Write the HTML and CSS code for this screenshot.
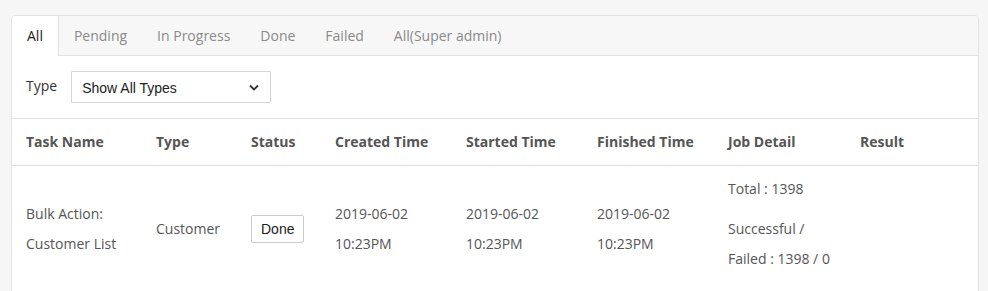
FILE: index.html
```html
<!DOCTYPE html>
<html lang="en">
<head>
    <meta charset="UTF-8">
    <meta name="viewport" content="width=device-width, initial-scale=1.0">
    <title>Tasks</title>
    <link rel="stylesheet" href="styles.css">
</head>
<body>
    <div class="page">
        <div class="panel">
            <ul class="tabs">
                <li class="tab active">All</li>
                <li class="tab">Pending</li>
                <li class="tab">In Progress</li>
                <li class="tab">Done</li>
                <li class="tab">Failed</li>
                <li class="tab">All(Super admin)</li>
            </ul>

            <div class="filter">
                <label class="filter-label">Type</label>
                <div class="select">
                    <span class="select-text">Show All Types</span>
                    <svg class="chevron" width="10" height="7" viewBox="0 0 10 7">
                        <path d="M1 1.5 L5 5.5 L9 1.5" fill="none" stroke="#333" stroke-width="1.8"/>
                    </svg>
                </div>
            </div>

            <table class="tasks">
                <colgroup>
                    <col class="c-name">
                    <col class="c-type">
                    <col class="c-status">
                    <col class="c-time">
                    <col class="c-time">
                    <col class="c-time">
                    <col class="c-detail">
                    <col>
                </colgroup>
                <thead>
                    <tr>
                        <th>Task Name</th>
                        <th>Type</th>
                        <th>Status</th>
                        <th>Created Time</th>
                        <th>Started Time</th>
                        <th>Finished Time</th>
                        <th>Job Detail</th>
                        <th>Result</th>
                    </tr>
                </thead>
                <tbody>
                    <tr>
                        <td>Bulk Action:<br>Customer List</td>
                        <td>Customer</td>
                        <td><button class="status-btn">Done</button></td>
                        <td>2019-06-02<br>10:23PM</td>
                        <td>2019-06-02<br>10:23PM</td>
                        <td>2019-06-02<br>10:23PM</td>
                        <td>
                            <p>Total : 1398</p>
                            <p>Successful /<br>Failed : 1398 / 0</p>
                        </td>
                        <td></td>
                    </tr>
                </tbody>
            </table>
        </div>
    </div>
</body>
</html>
```

FILE: styles.css
```css
* {
    margin: 0;
    padding: 0;
    box-sizing: border-box;
}

body {
    font-family: 'Open Sans', 'Liberation Sans', sans-serif;
    font-size: 14px;
    color: #555;
    background-color: #f6f6f6;
    height: 100vh;
    overflow: hidden;
}

.page {
    padding: 15px 9px 0 11px;
}

.panel {
    background-color: white;
    border: 1px solid #e2e2e2;
    border-radius: 4px 4px 0 0;
    overflow: hidden;
}

.tabs {
    list-style: none;
    display: flex;
    background-color: #f7f7f7;
    border-bottom: 1px solid #e2e2e2;
    height: 40px;
}

.tab {
    padding: 0 15px;
    line-height: 40px;
    color: #8a8a8a;
}

.tab.active {
    background-color: white;
    color: #222;
    border-right: 1px solid #e2e2e2;
    height: 40px;
    margin-bottom: -1px;
}

.filter {
    display: flex;
    align-items: center;
    gap: 14px;
    padding: 15px 14px 15px 14px;
    border-bottom: 1px solid #e2e2e2;
}

.filter-label {
    color: #333;
    margin-top: -3px;
}

.select {
    width: 200px;
    height: 32px;
    border: 1px solid #d6d6d6;
    border-radius: 1px;
    display: flex;
    align-items: center;
    justify-content: space-between;
    padding: 0 10px 0 10px;
    color: #222;
    font-family: 'Liberation Sans', Arial, sans-serif;
}

.select-text {
    margin-top: 2px;
}

.chevron {
    margin-right: 1px;
}

.tasks {
    width: 100%;
    border-collapse: collapse;
    table-layout: fixed;
}

.c-name { width: 144px; }
.c-type { width: 95px; }
.c-status { width: 84px; }
.c-time { width: 131px; }
.c-detail { width: 132px; }

.tasks th {
    text-align: left;
    font-weight: bold;
    color: #555;
    padding: 9px 0 9px 14px;
    line-height: 28px;
    border-bottom: 1px solid #e2e2e2;
}

.tasks th + th,
.tasks td + td {
    padding-left: 0;
}

.tasks td {
    padding: 8px 0 8px 14px;
    line-height: 30px;
    vertical-align: middle;
    color: #555;
}

.tasks td p {
    margin-bottom: 10px;
}

.status-btn {
    font-family: 'Liberation Sans', Arial, sans-serif;
    font-size: 14px;
    color: #222;
    background-color: white;
    border: 1px solid #ccc;
    border-radius: 2px;
    padding: 0 9px;
    height: 28px;
    line-height: 26px;
}
```
